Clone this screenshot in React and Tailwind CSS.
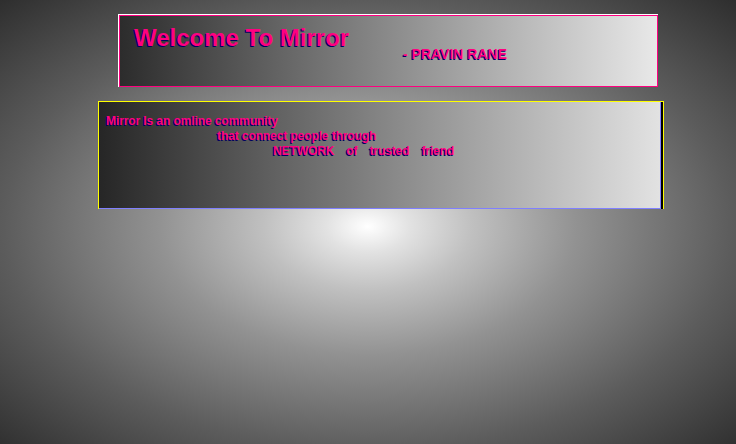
const pink = 'text-[#ff0080] [text-shadow:-1px_1px_0_#000060]';

function Header() {
  return (
    <div className="ml-[118px] w-[540px] border-t border-l border-white">
      <div className="h-[72px] border border-[#ff0080] bg-[linear-gradient(to_right,#2c2c2c,#e8e8e8)] pl-[14px] pt-[10px]">
        <div className={`text-[24px] font-bold leading-[24px] ${pink}`}>Welcome To Mirror</div>
        <div className={`ml-[269px] mt-[-4px] text-[14px] font-bold leading-[16px] ${pink}`}>- PRAVIN RANE</div>
      </div>
    </div>
  );
}

function About() {
  return (
    <div className="mt-[14px] ml-[98px] w-[566px] border-t border-l border-r border-[#ffff00]">
      <div className="border-r-2 border-black">
        <div className="h-[107px] border-b border-r border-[#8080ff] bg-[linear-gradient(to_right,#262626,#e2e2e2)] pl-[7px] pt-[12px] text-[12px] font-bold leading-[15px] tracking-[-0.1px] whitespace-pre">
          <div className={pink}>Mirror Is an omline community</div>
          <div className={`ml-[111px] ${pink}`}>that connect people through</div>
          <div className={`ml-[167px] flex gap-[12px] ${pink}`}>
            <span>NETWORK</span>
            <span>of</span>
            <span>trusted</span>
            <span>friend</span>
          </div>
        </div>
      </div>
    </div>
  );
}

export default function App() {
  return (
    <div
      className="h-screen w-full overflow-hidden pt-[14px] bg-[radial-gradient(ellipse_at_50%_51%,#ffffff_0%,#e2e2e2_8%,#c0c0c0_20%,#929292_40%,#5c5c5c_70%,#2e2e2e_100%)]"
      style={{ fontFamily: '"Liberation Sans", Arial, sans-serif' }}
    >
      <Header />
      <About />
    </div>
  );
}
